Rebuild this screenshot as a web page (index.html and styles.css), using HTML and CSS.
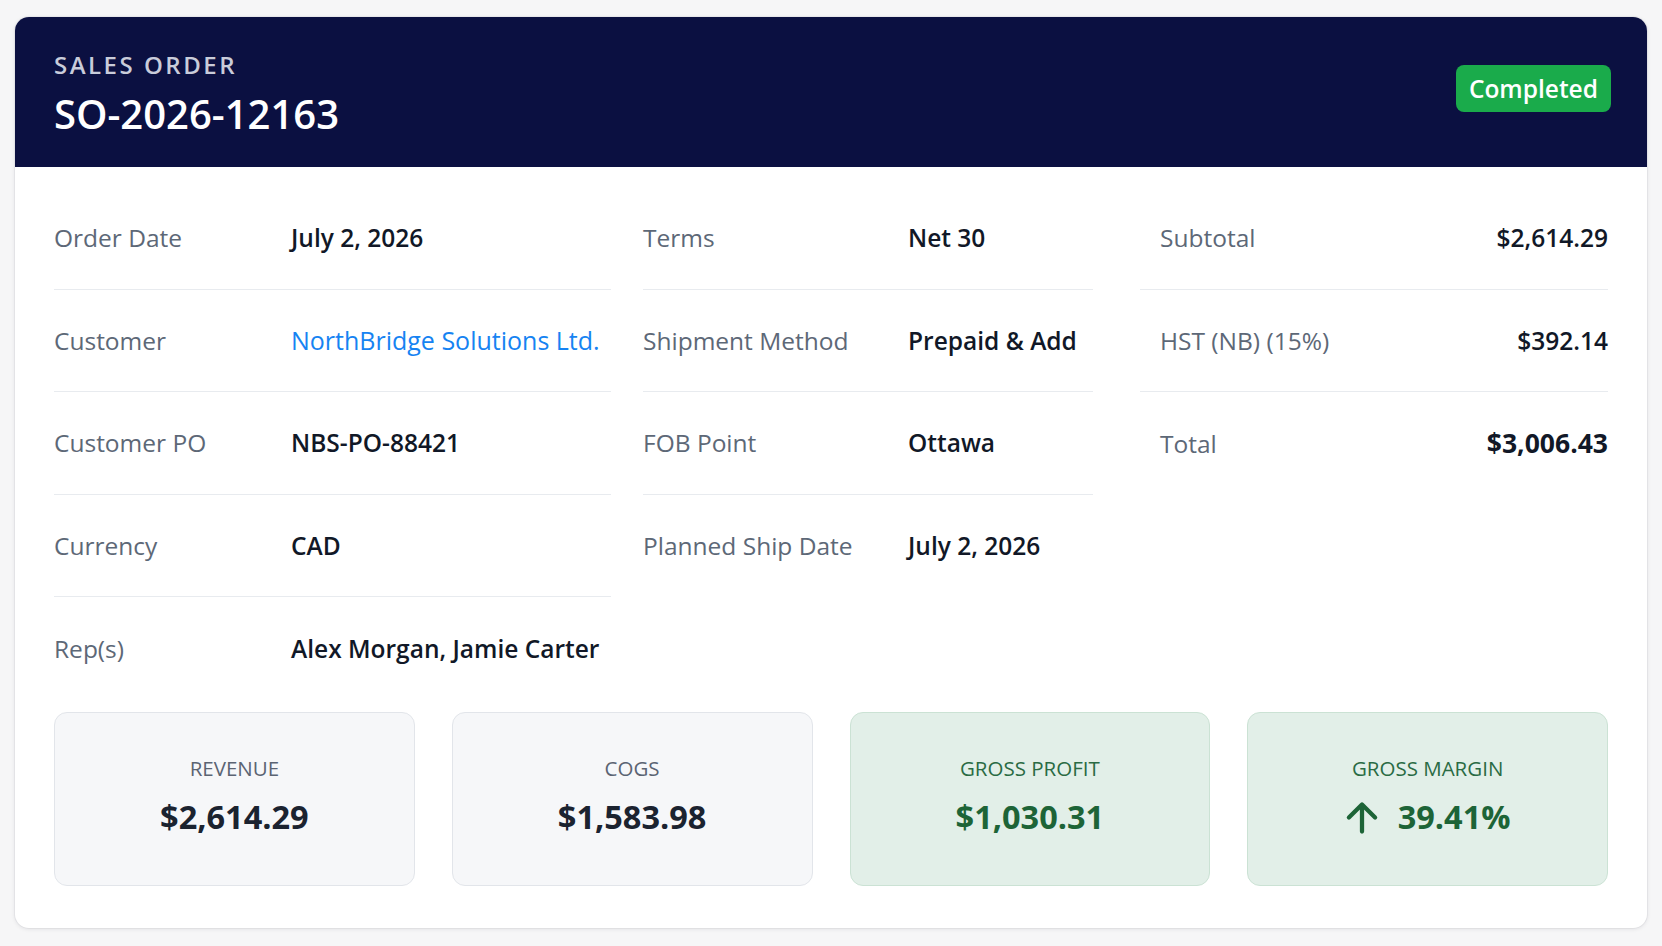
FILE: index.html
```html
<!DOCTYPE html>
<html lang="en">
<head>
<meta charset="utf-8">
<title>Sales Order SO-2026-12163</title>
<link rel="stylesheet" href="styles.css">
</head>
<body>
<div class="card">
  <header class="card-head">
    <div class="head-text">
      <div class="eyebrow">SALES ORDER</div>
      <h1 class="title">SO-2026-12163</h1>
    </div>
    <span class="badge">Completed</span>
  </header>
  <div class="card-body">
    <div class="details">
      <div class="col col-a">
        <div class="row"><span class="label">Order Date</span><span class="value">July 2, 2026</span></div>
        <div class="row"><span class="label">Customer</span><span class="value link">NorthBridge Solutions Ltd.</span></div>
        <div class="row"><span class="label">Customer PO</span><span class="value">NBS-PO-88421</span></div>
        <div class="row"><span class="label">Currency</span><span class="value">CAD</span></div>
        <div class="row"><span class="label">Rep(s)</span><span class="value">Alex Morgan, Jamie Carter</span></div>
      </div>
      <div class="col col-b">
        <div class="row"><span class="label">Terms</span><span class="value">Net 30</span></div>
        <div class="row"><span class="label">Shipment Method</span><span class="value">Prepaid &amp; Add</span></div>
        <div class="row"><span class="label">FOB Point</span><span class="value">Ottawa</span></div>
        <div class="row"><span class="label">Planned Ship Date</span><span class="value">July 2, 2026</span></div>
      </div>
      <div class="col col-c">
        <div class="row"><span class="label">Subtotal</span><span class="value">$2,614.29</span></div>
        <div class="row"><span class="label">HST (NB) (15%)</span><span class="value">$392.14</span></div>
        <div class="row"><span class="label">Total</span><span class="value strong">$3,006.43</span></div>
      </div>
    </div>
    <div class="metrics">
      <div class="metric">
        <div class="m-label">REVENUE</div>
        <div class="m-value">$2,614.29</div>
      </div>
      <div class="metric">
        <div class="m-label">COGS</div>
        <div class="m-value">$1,583.98</div>
      </div>
      <div class="metric good">
        <div class="m-label">GROSS PROFIT</div>
        <div class="m-value">$1,030.31</div>
      </div>
      <div class="metric good">
        <div class="m-label">GROSS MARGIN</div>
        <div class="m-value"><svg class="arrow" viewBox="0 0 34 34" width="34" height="33" aria-hidden="true"><path d="M17 31.5V4M3.5 17L17 3.5 30.5 17" fill="none" stroke="currentColor" stroke-width="4.4" stroke-linecap="round" stroke-linejoin="round"/></svg><span>39.41%</span></div>
      </div>
    </div>
  </div>
</div>
</body>
</html>
```

FILE: styles.css
```css
* { box-sizing: border-box; }

html, body {
  margin: 0;
  background: #f6f6f7;
}

body {
  padding: 17px 15px;
  font-family: "Open Sans", "Noto Sans", "Liberation Sans", sans-serif;
  color: #111827;
}

.card {
  background: #ffffff;
  border-radius: 14px;
  overflow: hidden;
  box-shadow: 0 1px 4px rgba(15, 23, 42, 0.10), 0 0 0 1px rgba(15, 23, 42, 0.04);
}

.card-head {
  background: #0b1041;
  height: 150px;
  padding: 33px 36px 0 39px;
  display: flex;
  justify-content: space-between;
  align-items: flex-start;
}

.eyebrow {
  color: #c9ccda;
  font-size: 24px;
  line-height: 30px;
  font-weight: 600;
  letter-spacing: 2.5px;
}

.title {
  margin: 10px 0 0;
  color: #ffffff;
  font-size: 40px;
  line-height: 48px;
  font-weight: 600;
  letter-spacing: 0;
}

.badge {
  margin-top: 15px;
  background: #1aab4b;
  color: #ffffff;
  font-size: 24.5px;
  line-height: 47px;
  height: 47px;
  padding: 0 13px;
  border-radius: 8px;
  font-weight: 600;
}

.card-body {
  padding: 20px 39px 42px;
}

.details {
  display: flex;
  gap: 32px;
}

.col-a { width: 557px; }
.col-b { width: 450px; }
.col-c { width: 468px; margin-left: 15px; }

.row {
  height: 102.5px;
  display: flex;
  align-items: center;
  border-bottom: 1px solid #e8ebef;
}

.row:last-child { border-bottom: none; }

.label {
  color: #5d6877;
  font-size: 24.5px;
  font-weight: 400;
}

.value {
  color: #111827;
  font-size: 24.5px;
  font-weight: 600;
}

.col-a .label { width: 237px; flex: none; }
.col-b .label { width: 265px; flex: none; }
.col-c .row { justify-content: space-between; padding-left: 20px; }

.link { color: #1683f2; font-weight: 500; font-size: 25px; }
.strong { font-weight: 700; font-size: 26.5px; }

.metrics {
  margin-top: 12px;
  display: grid;
  grid-template-columns: repeat(4, 1fr);
  gap: 37px;
}

.metric {
  height: 174px;
  background: #f6f7f9;
  border: 1px solid #e2e5ea;
  border-radius: 13px;
  display: flex;
  flex-direction: column;
  align-items: center;
  justify-content: center;
  gap: 16px;
  padding-bottom: 5px;
}

.m-label {
  font-size: 20.5px;
  line-height: 26px;
  color: #5b6473;
  letter-spacing: 0;
}

.m-value {
  font-size: 32.5px;
  line-height: 40px;
  font-weight: 700;
  color: #1b2330;
  display: flex;
  align-items: center;
  gap: 19px;
}

.metric.good {
  background: #e2efe8;
  border-color: #cbe2d4;
}

.metric.good .m-label { color: #2a6b44; }
.metric.good .m-value { color: #1d6437; }

.arrow { display: block; }
```
